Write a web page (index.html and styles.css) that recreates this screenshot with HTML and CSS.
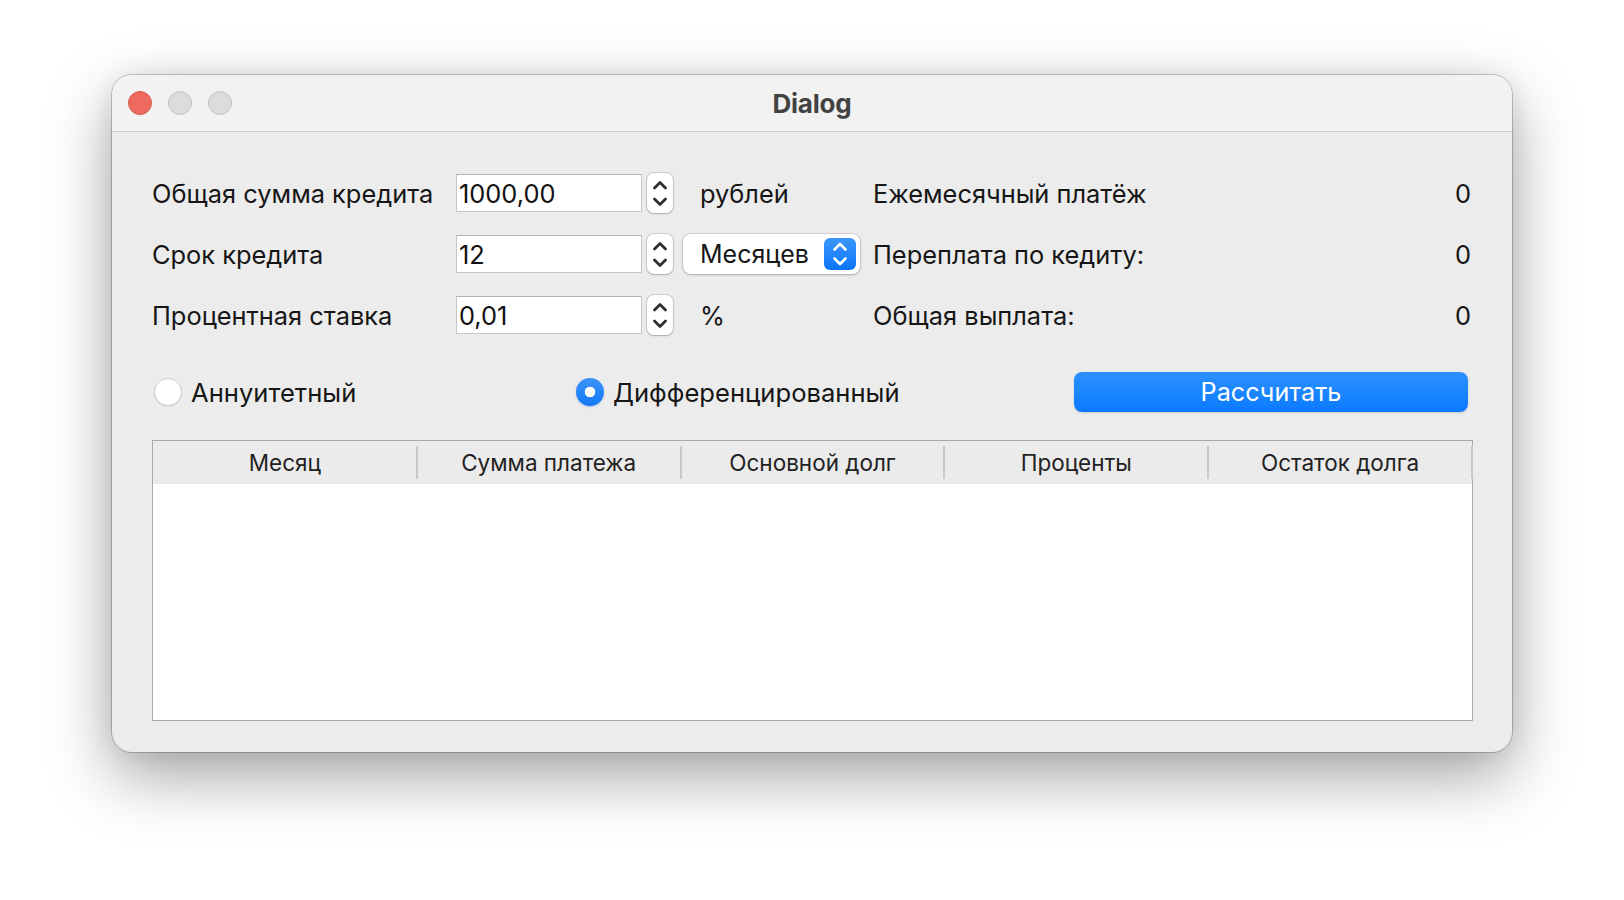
FILE: index.html
```html
<!DOCTYPE html>
<html lang="ru">
<head>
<meta charset="utf-8">
<title>Dialog</title>
<link rel="stylesheet" href="styles.css">
</head>
<body>
<div class="desk">
  <div class="window">
    <div class="titlebar">
      <div class="lights">
        <span class="light light-close"></span>
        <span class="light"></span>
        <span class="light"></span>
      </div>
      <div class="title">Dialog</div>
      <div class="spacer"></div>
    </div>
    <div class="content">
      <div class="form">
        <div class="label">Общая сумма кредита</div>
        <div class="field"><input class="input" type="text" value="1000,00"></div>
        <div class="spin">
          <svg width="26" height="40" viewBox="0 0 26 40"><path d="M7.5 15 L13 9.5 L18.5 15" /><path d="M7.5 26 L13 31.5 L18.5 26" /></svg>
        </div>
        <div class="unit">рублей</div>
        <div class="result">Ежемесячный платёж</div>
        <div class="value">0</div>

        <div class="label">Срок кредита</div>
        <div class="field"><input class="input" type="text" value="12"></div>
        <div class="spin">
          <svg width="26" height="40" viewBox="0 0 26 40"><path d="M7.5 15 L13 9.5 L18.5 15" /><path d="M7.5 26 L13 31.5 L18.5 26" /></svg>
        </div>
        <div class="combo-cell">
          <div class="combo">
            <span class="combo-text">Месяцев</span>
            <span class="combo-btn">
              <svg width="32" height="32" viewBox="0 0 32 32"><path d="M10.5 11.5 L16 6 L21.5 11.5" /><path d="M10.5 20.5 L16 26 L21.5 20.5" /></svg>
            </span>
          </div>
        </div>
        <div class="result">Переплата по кедиту:</div>
        <div class="value">0</div>

        <div class="label">Процентная ставка</div>
        <div class="field"><input class="input" type="text" value="0,01"></div>
        <div class="spin">
          <svg width="26" height="40" viewBox="0 0 26 40"><path d="M7.5 15 L13 9.5 L18.5 15" /><path d="M7.5 26 L13 31.5 L18.5 26" /></svg>
        </div>
        <div class="unit">%</div>
        <div class="result">Общая выплата:</div>
        <div class="value">0</div>
      </div>

      <div class="mode-row">
        <label class="radio-item">
          <span class="radio"></span>
          <span class="radio-text">Аннуитетный</span>
        </label>
        <label class="radio-item">
          <span class="radio radio-on"></span>
          <span class="radio-text">Дифференцированный</span>
        </label>
        <div class="btn-cell">
          <button class="btn" type="button">Рассчитать</button>
        </div>
      </div>

      <div class="table">
        <div class="thead">
          <div class="th">Месяц</div>
          <div class="th">Сумма платежа</div>
          <div class="th">Основной долг</div>
          <div class="th">Проценты</div>
          <div class="th">Остаток долга</div>
        </div>
        <div class="tbody"></div>
      </div>
    </div>
  </div>
</div>
</body>
</html>
```

FILE: styles.css
```css
* { box-sizing: border-box; }

html, body {
  margin: 0;
  padding: 0;
  background: #ffffff;
}

body {
  font-family: "Inter", "Noto Sans", sans-serif;
  color: #161616;
}

.desk {
  width: 1624px;
  height: 900px;
  padding: 75px 0 0 112px;
  background: #ffffff;
}

.window {
  width: 1400px;
  height: 677px;
  border-radius: 20px;
  background: #ececec;
  box-shadow: 0 0 0 1px rgba(0, 0, 0, 0.2), 0 24px 64px rgba(0, 0, 0, 0.36), 0 0 24px rgba(0, 0, 0, 0.08);
  overflow: hidden;
  display: flex;
  flex-direction: column;
}

.titlebar {
  height: 57px;
  flex: 0 0 57px;
  background: #f2f2f2;
  border-bottom: 1px solid #cbcbcb;
  display: grid;
  grid-template-columns: 1fr auto 1fr;
  align-items: center;
  padding: 0 16px;
}

.lights {
  display: flex;
  gap: 16px;
  align-items: center;
}

.light {
  width: 24px;
  height: 24px;
  border-radius: 50%;
  background: #dcdcdc;
  border: 1px solid #c4c4c4;
}

.light-close {
  background: #ee6a5f;
  border-color: #d8574c;
}

.title {
  font-weight: 700;
  font-size: 26px;
  color: #424242;
  letter-spacing: -0.2px;
}

.content {
  flex: 1;
  padding: 41px 39px 31px 40px;
  display: flex;
  flex-direction: column;
}

.form {
  display: grid;
  grid-template-columns: 304px 191px 36px 190px 1fr auto;
  grid-template-rows: 40px 40px 40px;
  row-gap: 21px;
  align-items: center;
  font-size: 25.4px;
}

.label {
  white-space: nowrap;
}

.field {
  display: flex;
  align-items: center;
}

.input {
  width: 186px;
  height: 38px;
  border: 1px solid #c6c6c6;
  border-top-color: #b2b2b2;
  background: #ffffff;
  font-family: inherit;
  font-size: 25.4px;
  color: #111111;
  padding: 0 0 0 2px;
  margin: 0;
  outline: none;
}

.spin {
  width: 26px;
  height: 40px;
  border-radius: 7px;
  background: #ffffff;
  box-shadow: 0 0 0 1px rgba(0, 0, 0, 0.12), 0 1px 2px rgba(0, 0, 0, 0.18);
}

.spin svg {
  display: block;
}

.spin path {
  fill: none;
  stroke: #2e2e2e;
  stroke-width: 2.8;
  stroke-linecap: round;
  stroke-linejoin: round;
}

.unit {
  padding-left: 17px;
}

.combo-cell {
  display: flex;
  align-items: center;
}

.combo {
  width: 177px;
  height: 40px;
  border-radius: 8px;
  background: #ffffff;
  box-shadow: 0 0 0 1px rgba(0, 0, 0, 0.1), 0 1px 3px rgba(0, 0, 0, 0.2);
  display: flex;
  align-items: center;
  justify-content: space-between;
  padding: 0 4px 0 17px;
  font-size: 25px;
}

.combo-text {
  color: #161616;
}

.combo-btn {
  width: 32px;
  height: 32px;
  border-radius: 6px;
  background: linear-gradient(#3c98fc, #0a74f7);
}

.combo-btn svg {
  display: block;
}

.combo-btn path {
  fill: none;
  stroke: #ffffff;
  stroke-width: 2.6;
  stroke-linecap: round;
  stroke-linejoin: round;
}

.result {
  white-space: nowrap;
}

.value {
  text-align: right;
  padding-right: 2px;
}

.mode-row {
  margin-top: 37px;
  height: 40px;
  display: grid;
  grid-template-columns: 422px 500px 1fr;
  align-items: center;
  font-size: 25.6px;
}

.radio-item {
  display: flex;
  align-items: center;
  gap: 9px;
  padding-left: 2px;
}

.radio {
  width: 28px;
  height: 28px;
  border-radius: 50%;
  background: #ffffff;
  border: 1px solid #cdcdcd;
  box-shadow: 0 1px 1px rgba(0, 0, 0, 0.08);
}

.radio-on {
  border: none;
  background: radial-gradient(circle, #ffffff 0 5px, transparent 5.6px), linear-gradient(#3a95fb, #1378f5);
  box-shadow: 0 1px 2px rgba(0, 80, 200, 0.25);
}

.btn-cell {
  display: flex;
}

.btn {
  width: 394px;
  height: 40px;
  border: none;
  border-radius: 8px;
  background: linear-gradient(#2c91fe, #0a7aff);
  box-shadow: 0 1px 2px rgba(0, 0, 0, 0.15);
  color: #ffffff;
  font-family: inherit;
  font-size: 25.2px;
  padding: 0;
}

.table {
  margin-top: 28px;
  height: 281px;
  border: 1px solid #a9a9a9;
  background: #ffffff;
  display: flex;
  flex-direction: column;
}

.thead {
  height: 43px;
  flex: 0 0 43px;
  background: #ebebeb;
  display: grid;
  grid-template-columns: repeat(5, 1fr);
}

.th {
  position: relative;
  display: flex;
  align-items: center;
  justify-content: center;
  font-size: 22.5px;
  color: #222222;
}

.th::after {
  content: "";
  position: absolute;
  right: -1px;
  top: 5px;
  bottom: 5px;
  width: 2px;
  background: #c8c8c8;
}

.tbody {
  flex: 1;
  background: #ffffff;
}
```
